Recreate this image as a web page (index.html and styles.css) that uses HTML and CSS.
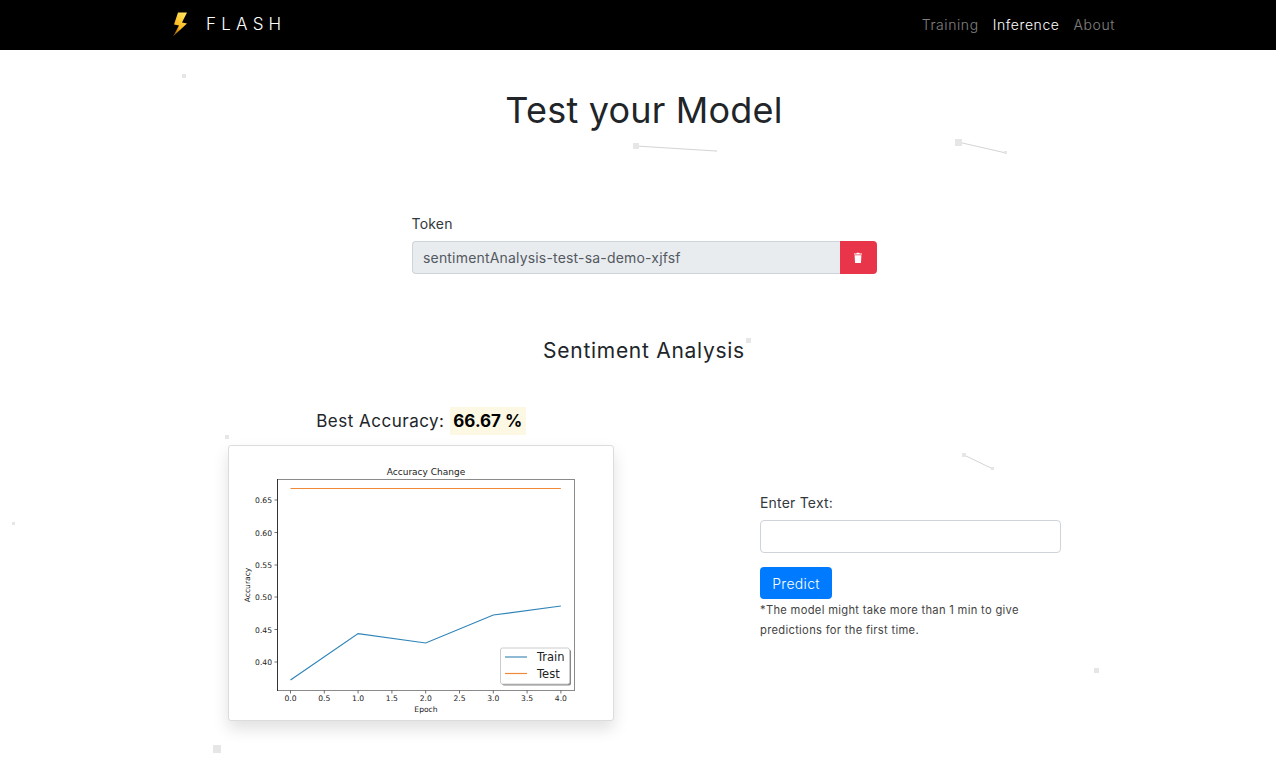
FILE: index.html
```html
<!DOCTYPE html>
<html lang="en">
<head>
    <meta charset="UTF-8">
    <meta name="viewport" content="width=device-width, initial-scale=1.0">
    <title>Flash</title>
    <link rel="stylesheet" href="styles.css">
</head>
<body>
    <!-- background particles -->
    <svg class="particles" width="1276" height="776" viewBox="0 0 1276 776">
        <g class="particle-lines">
            <line x1="636" y1="146" x2="716" y2="151"/>
            <line x1="958" y1="142" x2="1006" y2="153"/>
            <line x1="964" y1="455" x2="993" y2="469"/>
        </g>
        <g class="particle-dots">
            <rect x="182" y="74" width="4" height="4"/>
            <rect x="633" y="143" width="6" height="6"/>
            <rect x="715" y="150" width="2" height="2"/>
            <rect x="955" y="139" width="7" height="7"/>
            <rect x="1004" y="151" width="3" height="3"/>
            <rect x="746" y="338" width="5" height="5"/>
            <rect x="225" y="435" width="4" height="4"/>
            <rect x="962" y="453" width="4" height="4"/>
            <rect x="991" y="467" width="3" height="3"/>
            <rect x="12" y="522" width="3" height="3"/>
            <rect x="1094" y="668" width="5" height="5"/>
            <rect x="213" y="745" width="8" height="8"/>
        </g>
    </svg>

    <nav class="navbar">
        <a class="brand" href="#">
            <svg class="brand-icon" width="20" height="26" viewBox="0 0 20 26">
                <defs>
                    <linearGradient id="bolt" x1="0.7" y1="0" x2="0.2" y2="1">
                        <stop offset="0" stop-color="#ffe25a"/>
                        <stop offset="0.6" stop-color="#fbb81f"/>
                        <stop offset="1" stop-color="#8a4a08"/>
                    </linearGradient>
                </defs>
                <polygon points="7,1.5 16,1.5 11,11.5 16,12.5 2,25.5 8,14.5 3,13.5" fill="url(#bolt)"/>
            </svg>
            <span class="brand-name">FLASH</span>
        </a>
        <div class="nav-links">
            <a class="nav-link" href="#">Training</a>
            <a class="nav-link active" href="#">Inference</a>
            <a class="nav-link" href="#">About</a>
        </div>
    </nav>

    <div class="container">
        <h1 class="title">Test your Model</h1>

        <div class="token-box">
            <label class="field-label">Token</label>
            <div class="input-group">
                <div class="token-value">sentimentAnalysis-test-sa-demo-xjfsf</div>
                <button class="delete-btn" type="button" aria-label="Delete">
                    <svg width="10" height="11" viewBox="0 0 10 11">
                        <path d="M1 1.6h2.4l0.4-0.9h2.4l0.4 0.9h2.4v1h-8zM1.6 3.3h6.8l-0.4 7.1q0 0.6-0.7 0.6h-4.6q-0.7 0-0.7-0.6z" fill="#fff"/>
                    </svg>
                </button>
            </div>
        </div>

        <h2 class="section-title">Sentiment Analysis</h2>

        <div class="result-row">
            <div class="chart-col">
                <p class="accuracy">Best Accuracy: <mark class="accuracy-value">66.67 %</mark></p>
                <div class="chart-card">
                    <svg class="chart" width="384" height="274" viewBox="0 0 384 274">
                        <text class="chart-title" x="197" y="28.5" text-anchor="middle">Accuracy Change</text>
                        <rect class="axes" x="48.5" y="33.5" width="297" height="211"/>
                        <path class="axis-dark" d="M48.5 33v212h297"/>
                        <g class="ticks">
                            <path d="M61.5 244.5v3M95.3 244.5v3M129.1 244.5v3M162.9 244.5v3M196.7 244.5v3M230.5 244.5v3M264.3 244.5v3M298.1 244.5v3M331.9 244.5v3"/>
                            <path d="M45.5 54h3M45.5 86.5h3M45.5 119h3M45.5 151h3M45.5 183.5h3M45.5 216h3"/>
                        </g>
                        <g class="tick-text" text-anchor="middle">
                            <text x="61.5" y="255">0.0</text>
                            <text x="95.3" y="255">0.5</text>
                            <text x="129.1" y="255">1.0</text>
                            <text x="162.9" y="255">1.5</text>
                            <text x="196.7" y="255">2.0</text>
                            <text x="230.5" y="255">2.5</text>
                            <text x="264.3" y="255">3.0</text>
                            <text x="298.1" y="255">3.5</text>
                            <text x="331.9" y="255">4.0</text>
                        </g>
                        <g class="tick-text" text-anchor="end">
                            <text x="43" y="57">0.65</text>
                            <text x="43" y="89.5">0.60</text>
                            <text x="43" y="122">0.55</text>
                            <text x="43" y="154">0.50</text>
                            <text x="43" y="186.5">0.45</text>
                            <text x="43" y="219">0.40</text>
                        </g>
                        <text class="tick-text" x="197" y="266" text-anchor="middle">Epoch</text>
                        <text class="tick-text" transform="translate(21 139) rotate(-90)" text-anchor="middle">Accuracy</text>
                        <polyline class="line-train" points="61.5,234 129.1,187.6 196.7,197 264.3,169 331.9,160"/>
                        <line class="line-test" x1="61.5" y1="42.5" x2="331.9" y2="42.5"/>
                        <rect class="legend-shadow" x="273" y="203.5" width="69" height="36" rx="2"/>
                        <rect class="legend" x="271.5" y="202" width="69" height="36" rx="2"/>
                        <line class="line-train legend-train" x1="276" y1="211" x2="298" y2="211"/>
                        <line class="line-test" x1="276" y1="227.5" x2="298" y2="227.5"/>
                        <text class="legend-text" x="308" y="215">Train</text>
                        <text class="legend-text" x="308" y="231.5">Test</text>
                    </svg>
                </div>
            </div>
            <div class="predict-col">
                <label class="field-label">Enter Text:</label>
                <input class="text-input" type="text">
                <button class="predict-btn" type="button">Predict</button>
                <p class="note">*The model might take more than 1 min to give predictions for the first time.</p>
            </div>
        </div>
    </div>
</body>
</html>
```

FILE: styles.css
```css
* {
    margin: 0;
    padding: 0;
    box-sizing: border-box;
}
body {
    font-family: Inter, "Noto Sans", "Liberation Sans", sans-serif;
    background: #fff;
    color: #212529;
    height: 776px;
    overflow: hidden;
    position: relative;
}
a {
    text-decoration: none;
}
.particles {
    position: absolute;
    top: 0;
    left: 0;
}
.particle-lines line {
    stroke: #d4d4d4;
    stroke-width: 1;
}
.particle-dots rect {
    fill: #e6e6e6;
}
.navbar {
    position: relative;
    height: 50px;
    background: #000;
    display: flex;
    align-items: center;
    justify-content: space-between;
    padding: 0 161px 3px 171px;
}
.brand {
    display: flex;
    align-items: center;
    gap: 15px;
    color: #fff;
}
.brand-name {
    font-size: 17px;
    letter-spacing: 5.2px;
    font-weight: 300;
}
.nav-links {
    display: flex;
    gap: 14px;
    padding-top: 1px;
}
.nav-link {
    font-size: 14px;
    letter-spacing: 0.58px;
    font-weight: 300;
    color: rgba(255, 255, 255, 0.5);
}
.nav-link.active {
    color: #fff;
}
.container {
    position: relative;
    width: 944px;
    margin-left: 172px;
}
.title {
    margin-top: 37px;
    text-align: center;
    font-size: 36px;
    line-height: 46px;
    letter-spacing: 0.2px;
    font-weight: 400;
}
.token-box {
    width: 465px;
    margin: 81px auto 0;
}
.field-label {
    display: block;
    font-size: 14px;
    line-height: 20px;
    letter-spacing: 0.2px;
    color: #33383c;
}
.input-group {
    display: flex;
    height: 33px;
    margin-top: 7px;
}
.token-value {
    flex: 1;
    background: #e9ecef;
    border: 1px solid #ced4da;
    border-right: 0;
    border-radius: 4px 0 0 4px;
    padding: 0 10.5px;
    font-size: 14px;
    line-height: 31px;
    letter-spacing: 0.18px;
    color: #53595f;
}
.delete-btn {
    width: 37px;
    background: #e83549;
    border: 0;
    border-radius: 0 4px 4px 0;
    display: flex;
    align-items: center;
    justify-content: center;
}
.section-title {
    margin-top: 63px;
    text-align: center;
    font-size: 21px;
    line-height: 28px;
    font-weight: 400;
    letter-spacing: 0.72px;
}
.result-row {
    display: flex;
    margin-top: 42px;
    padding-left: 56px;
}
.chart-col {
    width: 386px;
}
.accuracy {
    text-align: center;
    font-size: 17px;
    line-height: 28px;
    letter-spacing: 0.5px;
}
.accuracy-value {
    display: inline-block;
    background: #fcf8e3;
    color: #000;
    font-weight: 700;
    letter-spacing: 0;
    padding: 0 3.5px;
}
.chart-card {
    height: 276px;
    margin-top: 10px;
    background: #fff;
    border: 1px solid #dcdcdc;
    border-radius: 3px;
    box-shadow: 0 8px 16px rgba(0, 0, 0, 0.12);
}
.chart {
    display: block;
}
.chart text {
    font-family: "DejaVu Sans", sans-serif;
    fill: #222;
}
.chart .chart-title {
    font-size: 9px;
}
.axes {
    fill: none;
    stroke: #8a8a8a;
    stroke-width: 1;
}
.axis-dark {
    fill: none;
    stroke: #333;
    stroke-width: 1;
    stroke-dasharray: 212 297;
}
.ticks path {
    stroke: #333;
    stroke-width: 0.7;
    fill: none;
}
.tick-text {
    font-size: 7.6px;
}
.line-train {
    fill: none;
    stroke: #2f84b8;
    stroke-width: 1.2;
}
.legend-train {
    stroke: #74a9c9;
    stroke-width: 1.6;
}
.line-test {
    stroke: #f08a38;
    stroke-width: 1.2;
}
.legend {
    fill: #fff;
    stroke: #ccc;
    stroke-width: 1;
}
.legend-shadow {
    fill: #888;
}
.chart .legend-text {
    font-size: 11.5px;
}
.predict-col {
    width: 301px;
    margin-left: 146px;
    padding-top: 86px;
}
.text-input {
    display: block;
    width: 100%;
    height: 33px;
    margin-top: 7px;
    border: 1px solid #ced4da;
    border-radius: 4px;
}
.predict-btn {
    display: block;
    width: 72px;
    height: 32px;
    margin-top: 14px;
    background: #007bff;
    border: 0;
    border-radius: 4px;
    color: #fff;
    font-family: inherit;
    font-size: 14px;
    font-weight: 300;
    letter-spacing: 0.3px;
}
.note {
    margin-top: 1px;
    font-size: 11.2px;
    line-height: 20px;
    letter-spacing: 0.3px;
    color: #444;
}
```
